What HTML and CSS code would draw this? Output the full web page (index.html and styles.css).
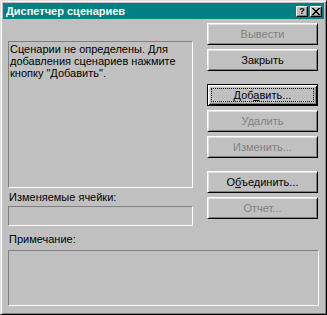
FILE: index.html
```html
<!DOCTYPE html>
<html lang="ru">
<head>
  <meta charset="UTF-8" />
  <title>Диспетчер сценариев</title>
  <link rel="stylesheet" href="styles.css">
</head>
<body>
  <div class="window">
    <div class="titlebar">
      <span class="title">Диспетчер сценариев</span>
      <div class="title-buttons">
        <span class="tbtn help">?</span>
        <span class="tbtn">
          <svg width="8" height="7" viewBox="0 0 8 7">
            <path d="M0 0h2v1H0z M6 0h2v1H6z M1 1h2v1H1z M5 1h2v1H5z M2 2h4v1H2z M3 3h2v1H3z M2 4h4v1H2z M1 5h2v1H1z M5 5h2v1H5z M0 6h2v1H0z M6 6h2v1H6z" fill="#000"/>
          </svg>
        </span>
      </div>
    </div>

    <div class="content">
      <div class="top">
        <div class="left">
          <div class="listbox">Сценарии не определены. Для<br>добавления сценариев нажмите<br>кнопку "Добавить".</div>
          <div class="label">Изменяемые ячейки:</div>
          <div class="field"></div>
        </div>
        <div class="buttons">
          <button class="btn" disabled>Вывести</button>
          <button class="btn">Закрыть</button>
          <button class="btn default gap">Доб<u>а</u>вить...</button>
          <button class="btn" disabled>Удалить</button>
          <button class="btn" disabled>Изменить...</button>
          <button class="btn gap">О<u>б</u>ъединить...</button>
          <button class="btn" disabled>Отчет...</button>
        </div>
      </div>
      <div class="label note-label">Примечание:</div>
      <div class="field note"></div>
    </div>
  </div>
</body>
</html>
```

FILE: styles.css
```css
body {
  margin: 0;
  background: #c0c0c0;
}
.window {
  width: 327px;
  height: 315px;
  box-sizing: border-box;
  background: #c0c0c0;
  border: 1px solid;
  border-color: #dfdfdf #000 #000 #dfdfdf;
  box-shadow: inset 1px 1px #fff, inset -1px -1px #808080;
  padding: 2px;
  font-family: "Liberation Sans", Arial, sans-serif;
  font-size: 11px;
  color: #000;
}
.titlebar {
  height: 16px;
  background: #008080;
  display: flex;
  align-items: center;
  justify-content: space-between;
  padding: 0 2px 0 3px;
}
.title {
  color: #fff;
  font-weight: bold;
  font-size: 11px;
  line-height: 16px;
}
.title-buttons {
  display: flex;
  gap: 2px;
}
.tbtn {
  width: 12px;
  height: 11px;
  box-sizing: border-box;
  background: #c0c0c0;
  border: 1px solid;
  border-color: #fff #000 #000 #fff;
  box-shadow: inset -1px -1px #808080;
  display: flex;
  align-items: center;
  justify-content: center;
  font-weight: bold;
  font-size: 9px;
  line-height: 9px;
}
.content {
  padding: 4px 5px 0 5px;
}
.top {
  display: flex;
  align-items: flex-start;
  gap: 14px;
}
.left {
  width: 185px;
}
.listbox {
  margin-top: 18px;
  height: 147px;
  box-sizing: border-box;
  border: 1px solid;
  border-color: #808080 #fff #fff #808080;
  padding: 1px 1px;
  line-height: 12px;
}
.label {
  line-height: 13px;
  margin-top: 3px;
  padding-left: 1px;
}
.field {
  height: 20px;
  margin-top: 2px;
  box-sizing: border-box;
  border: 1px solid;
  border-color: #808080 #fff #fff #808080;
}
.note-label {
  margin-top: 7px;
}
.note {
  height: 56px;
  margin-top: 4px;
}
.buttons {
  display: flex;
  flex-direction: column;
  gap: 4px;
}
.btn {
  width: 111px;
  height: 22px;
  box-sizing: border-box;
  background: #c0c0c0;
  border: 1px solid;
  border-color: #fff #000 #000 #fff;
  box-shadow: inset 1px 1px #dfdfdf, inset -1px -1px #808080;
  font-family: inherit;
  font-size: 11px;
  color: #000;
  padding: 0;
}
.btn:disabled {
  color: #808080;
}
.btn.gap {
  margin-top: 9px;
}
.btn.default {
  border-color: #000;
  box-shadow: inset 1px 1px #fff, inset -1px -1px #000, inset 2px 2px #dfdfdf, inset -2px -2px #808080;
  outline: 1px dotted #000;
  outline-offset: -5px;
}
```
